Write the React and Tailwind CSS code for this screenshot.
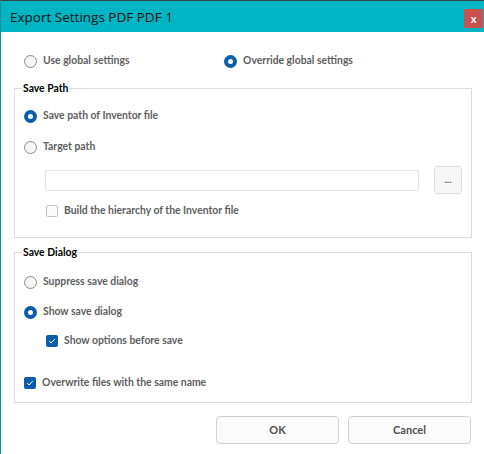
import React, { useState } from 'react';

const font = { fontFamily: 'Lato, "Open Sans", sans-serif' };

// Radio button with label
const Radio = ({ checked, label, onClick }) => (
  <div className="flex items-center h-[20px] cursor-pointer" onClick={onClick}>
    {checked ? (
      <span className="w-[13px] h-[13px] rounded-full bg-[#0b5cad] flex items-center justify-center">
        <span className="w-[5px] h-[5px] rounded-full bg-white" />
      </span>
    ) : (
      <span className="w-[13px] h-[13px] rounded-full border border-[#8c8c8c] bg-[#f6f6f6]" />
    )}
    <span className="ml-[6px] text-[10.4px] font-bold text-[#5e5e5e]">{label}</span>
  </div>
);

// Checkbox with label
const Check = ({ checked, label, onClick }) => (
  <div className="flex items-center h-[20px] cursor-pointer" onClick={onClick}>
    {checked ? (
      <span className="w-[12px] h-[12px] rounded-[2px] bg-[#0b5cad] flex items-center justify-center">
        <svg width="8" height="8" viewBox="0 0 8 8">
          <path d="M1.2 4.2 L3.1 6 L6.8 2" fill="none" stroke="white" strokeWidth="1" />
        </svg>
      </span>
    ) : (
      <span className="w-[12px] h-[12px] rounded-[2px] border border-[#c4c4c4] bg-[#fafafa]" />
    )}
    <span className="ml-[6px] text-[10.4px] font-bold text-[#5e5e5e]">{label}</span>
  </div>
);

const Group = ({ title, className, children }) => (
  <fieldset className={`ml-[13px] mr-[12px] border border-[#dcdcdc] pl-[9px] pr-[9px] ${className}`}>
    <legend className="-ml-[2px] px-[1px] text-[10.4px] leading-[12px] font-bold text-black">{title}</legend>
    {children}
  </fieldset>
);

export default function App() {
  const [mode, setMode] = useState('override');
  const [pathMode, setPathMode] = useState('inventor');
  const [dialogMode, setDialogMode] = useState('show');
  const [buildHierarchy, setBuildHierarchy] = useState(false);
  const [showOptions, setShowOptions] = useState(true);
  const [overwrite, setOverwrite] = useState(true);

  return (
    <div className="w-[484px] h-[454px] bg-white flex flex-col border-l border-[#0b8f9b] overflow-hidden" style={font}>
      {/* Title bar */}
      <div className="h-[32px] bg-[#00b5c3] border-t border-[#38444e] flex items-start justify-between shrink-0">
        <span
          className="pl-[9px] pt-[6px] text-[13.5px] text-[#111]"
          style={{ fontFamily: '"Open Sans", "Noto Sans", sans-serif' }}
        >
          Export Settings PDF PDF 1
        </span>
        <button className="mt-[8px] mr-[1px] w-[19px] h-[19px] bg-[#c85250] text-white text-[11px] font-bold leading-none flex items-center justify-center">
          x
        </button>
      </div>

      {/* Global settings */}
      <div className="mt-[19px] pl-[23px] flex">
        <div className="w-[200px]">
          <Radio checked={mode === 'global'} label="Use global settings" onClick={() => setMode('global')} />
        </div>
        <Radio checked={mode === 'override'} label="Override global settings" onClick={() => setMode('override')} />
      </div>

      {/* Save Path */}
      <Group title="Save Path" className="mt-[11px] pb-[16px]">
        <div className="mt-[12px]">
          <Radio checked={pathMode === 'inventor'} label="Save path of Inventor file" onClick={() => setPathMode('inventor')} />
        </div>
        <div className="mt-[11px]">
          <Radio checked={pathMode === 'target'} label="Target path" onClick={() => setPathMode('target')} />
        </div>
        <div className="mt-[9px] ml-[21px] flex items-center">
          <input className="w-[374px] h-[21px] border border-[#e3e3e3] rounded-[2px] outline-none px-1 text-[11px]" />
          <button className="ml-[15px] w-[28px] h-[28px] border border-[#dedede] rounded-[3px] bg-[#f7f7f7] text-[10px] font-bold text-[#555] leading-none pb-[3px]">
            ...
          </button>
        </div>
        <div className="mt-[7px] ml-[22px]">
          <Check checked={buildHierarchy} label="Build the hierarchy of the Inventor file" onClick={() => setBuildHierarchy(!buildHierarchy)} />
        </div>
      </Group>

      {/* Save Dialog */}
      <Group title="Save Dialog" className="mt-[8px] pb-[9px]">
        <div className="mt-[14px]">
          <Radio checked={dialogMode === 'suppress'} label="Suppress save dialog" onClick={() => setDialogMode('suppress')} />
        </div>
        <div className="mt-[10px]">
          <Radio checked={dialogMode === 'show'} label="Show save dialog" onClick={() => setDialogMode('show')} />
        </div>
        <div className="mt-[9px] ml-[22px]">
          <Check checked={showOptions} label="Show options before save" onClick={() => setShowOptions(!showOptions)} />
        </div>
        <div className="mt-[22px]">
          <Check checked={overwrite} label="Overwrite files with the same name" onClick={() => setOverwrite(!overwrite)} />
        </div>
      </Group>

      {/* Buttons */}
      <div className="mt-[13px] mr-[13px] flex justify-end gap-[9px]">
        <button className="w-[123px] h-[28px] border border-[#d2d2d2] rounded-[4px] bg-[#fbfbfb] text-[11px] font-bold text-[#505050]">
          OK
        </button>
        <button className="w-[123px] h-[28px] border border-[#d2d2d2] rounded-[4px] bg-[#fbfbfb] text-[11px] font-bold text-[#505050]">
          Cancel
        </button>
      </div>
    </div>
  );
}
